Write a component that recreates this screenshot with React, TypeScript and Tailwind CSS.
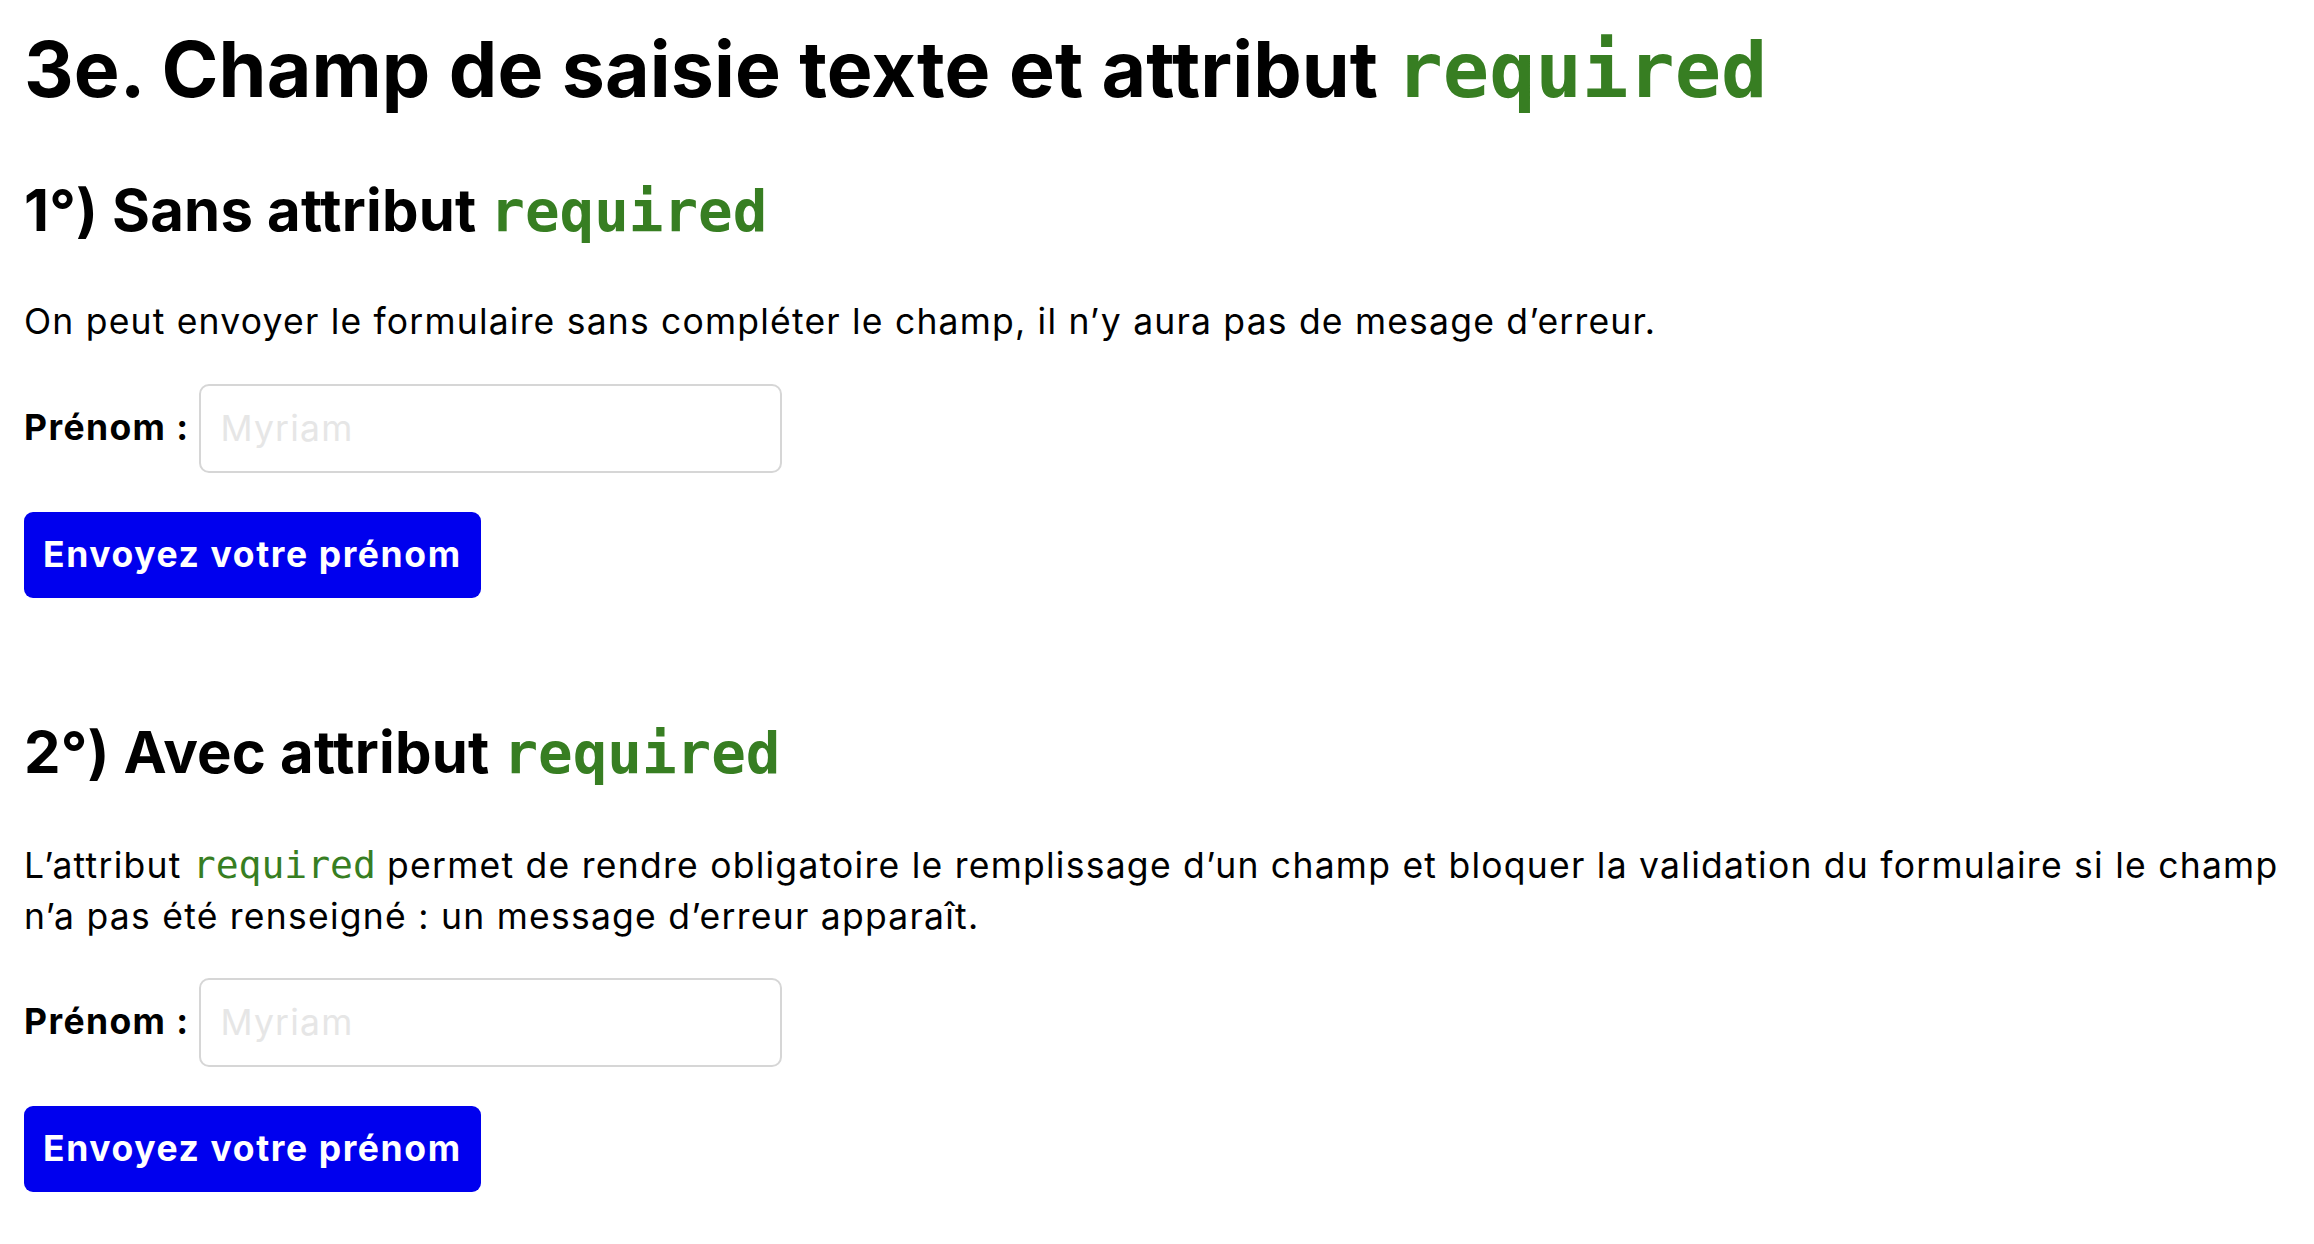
import React from "react";

const mono = '"DejaVu Sans Mono", "Liberation Mono", monospace';

const Form = () => (
  <form onSubmit={(e) => e.preventDefault()} className="flex flex-col items-start">
    <div className="flex items-center">
      <label className="text-[35.5px] tracking-[1.4px] font-bold leading-[52px] mr-[10px]">Prénom :</label>
      <input
        type="text"
        placeholder="Myriam"
        className="w-[583px] h-[89px] border-2 border-[#d6d6d6] rounded-[10px] px-[19px] text-[35.5px] tracking-[1.2px] placeholder:text-[#e6e6e6] outline-none"
      />
    </div>
    <button
      type="submit"
      className="mt-[39px] h-[86px] px-[19px] rounded-[9px] bg-[#0000ee] text-white font-bold text-[35.5px] tracking-[1.6px] leading-none"
    >
      Envoyez votre prénom
    </button>
  </form>
);

export default function App() {
  return (
    <div className="min-h-screen bg-white text-black pl-[24px] pr-[24px] pt-[23px]" style={{ fontFamily: 'Inter, "Liberation Sans", sans-serif' }}>
      <h1 className="text-[77px] tracking-[0.1px] font-bold leading-[92px]">
        3e. Champ de saisie texte et attribut{" "}
        <code className="font-bold text-[#377e22] text-[77px] tracking-normal" style={{ fontFamily: mono }}>required</code>
      </h1>
      <h2 className="mt-[58px] text-[58px] tracking-[0.2px] font-bold leading-[70px]">
        1°) Sans attribut{" "}
        <code className="font-bold text-[#377e22] text-[57.5px] tracking-normal" style={{ fontFamily: mono }}>required</code>
      </h2>
      <p className="mt-[49px] text-[35.5px] tracking-[1.2px] leading-[51.6px]">
        On peut envoyer le formulaire sans compléter le champ, il n’y aura pas de mesage d’erreur.
      </p>
      <div className="mt-[36px]">
        <Form />
      </div>
      <h2 className="mt-[119px] text-[58px] tracking-[0.2px] font-bold leading-[70px]">
        2°) Avec attribut{" "}
        <code className="font-bold text-[#377e22] text-[57.5px] tracking-normal" style={{ fontFamily: mono }}>required</code>
      </h2>
      <p className="mt-[51px] text-[35.5px] tracking-[1.25px] leading-[51.6px]">
        L’attribut{" "}
        <code className="font-normal text-[#377e22] text-[38px] tracking-normal" style={{ fontFamily: mono }}>required</code>{" "}
        permet de rendre obligatoire le remplissage d’un champ et bloquer la validation du formulaire si le champ n’a pas été renseigné : un message d’erreur apparaît.
      </p>
      <div className="mt-[35px]">
        <Form />
      </div>
    </div>
  );
}
